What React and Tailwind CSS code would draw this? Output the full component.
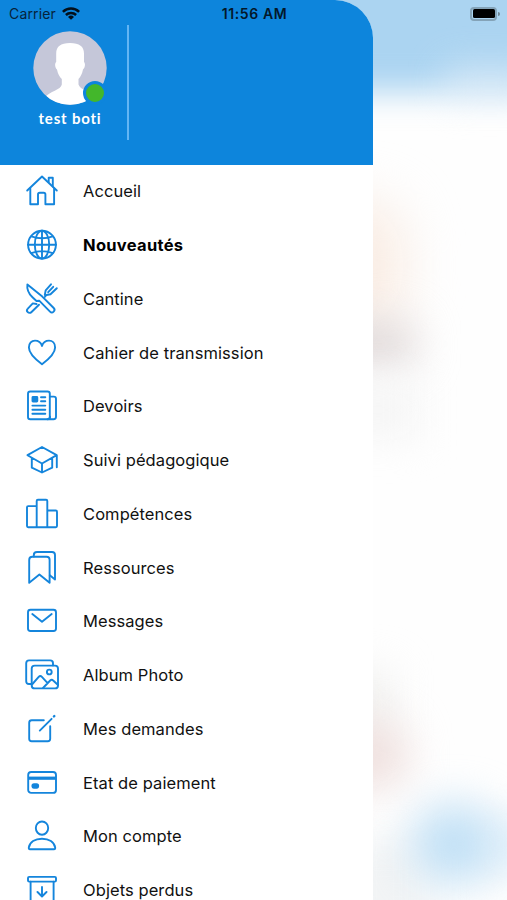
const icons = {
  home: (
    <>
      <path d="M3.2 17.5 18 3.5l14.8 14" />
      <path d="M24.700 9V4.8h4.100V13.500" />
      <path d="M6.300 15.500V31.200h7.700V21.500q0-1.700 1.700-1.700h4q1.700 0 1.700 1.700V31.200h8.700V15.500" />
    </>
  ),
  globe: (
    <>
      <circle cx="18" cy="17.700" r="13.900" />
      <ellipse cx="18" cy="17.700" rx="7.200" ry="13.900" />
      <path d="M18 3.800v27.800M4 17.700h28M7.300 9.300q10.700 4 21.400 0M7.300 26.100q10.700-4 21.400 0" />
    </>
  ),
  cutlery: (
    <>
      <path d="M3.400 3.400C2.600 9 5 13 8.500 16.300l4 3.700 2.700-.300L26 30.600a2.400 2.400 0 0 0 3.700-3.600L18.300 15.600z" />
      <path d="m12.500 23-3.700-.600-5 5.200a2.400 2.400 0 0 0 3.500 3.600l7.700-7.500" />
      <path d="m20.800 14 .9-4.700 5.300-6M24.200 11.200l5-5.400M32.800 7.200l-6.300 6.100-4 .7-1.700 2" />
    </>
  ),
  heart: (
    <path d="M18 29.200C9.500 22.800 4.900 18 4.900 12.400 4.900 8.200 7.600 5.600 11 5.600c3.300 0 5.900 1.900 7 5.300 1.100-3.400 3.700-5.300 7-5.300 3.400 0 6.100 2.600 6.100 6.800C31.100 18 26.500 22.800 18 29.200Z" />
  ),
  newspaper: (
    <>
      <rect x="4" y="3.500" width="21.800" height="27.800" rx="2.300" />
      <path d="M26 8.600h3.800q2.200 0 2.200 2.200v18q0 2.500-2.500 2.500h-6q2.500 0 2.500-2.500" />
      <rect x="8.500" y="9" width="4.800" height="4.500" rx=".5" fill="currentColor" />
      <path d="M17 9.300h4.300M17 13.300h4.300M8.400 17.600h12.900M8.400 21.700h12.900M8.400 25.700h12.900" />
    </>
  ),
  cap: (
    <path d="M18 5 3.500 13.200 18 21.500l14.700-8.300zM7.800 16v9.700L18 30.500l10.200-4.800V16M18 21.500v9M32.800 13.300v12" />
  ),
  podium: (
    <path d="M12.700 31.200H4.200q-1.200 0-1.200-1.200V11.300q0-1.200 1.200-1.200h8.500M12.700 31.200V5q0-1.200 1.200-1.200h8.200q1.200 0 1.200 1.200v26.200zM23.300 14.500h8.500q1.200 0 1.200 1.200V30q0 1.200-1.200 1.200h-8.500" />
  ),
  bookmarks: (
    <>
      <path d="M5.200 32.800V10q0-3.200 3.200-3.200h14.200q3 0 3 3v23L15.400 24.500z" />
      <path d="M9.800 6.600V5.200Q9.800 2 13 2h15q3 0 3 3v24.500l-5.200-4.200" />
    </>
  ),
  mail: (
    <>
      <rect x="4" y="6.700" width="28" height="21.300" rx="2.500" />
      <path d="m8.300 11 9.700 7.800 9.700-7.800" />
    </>
  ),
  album: (
    <>
      <path d="M7.500 27H5q-2.800 0-2.800-2.800V6.200Q2.200 3.400 5 3.400h21.200Q29 3.400 29 6.200v2.200" />
      <rect x="7.700" y="8.600" width="26.300" height="22.800" rx="3" />
      <circle cx="25.300" cy="15" r="2.400" />
      <path d="m8 27.500 6.700-7.600q1.600-1.700 3.200 0l5.500 6M19 31l7.200-7.500q1.500-1.500 3 0L34 28" />
    </>
  ),
  compose: (
    <>
      <path d="M19.800 9.300H7.700q-2.500 0-2.500 2.500v16q0 2.500 2.500 2.500h16q2.500 0 2.500-2.500V15.300M15.800 19.600 27.600 7.800" />
      <path d="m29.900 5.500.4-.4" strokeWidth="2.400" />
    </>
  ),
  card: (
    <>
      <rect x="4.200" y="7" width="27.800" height="20.900" rx="3" />
      <path d="M4.500 13.200h27.200" strokeWidth="3.200" strokeLinecap="butt" />
      <rect x="8.400" y="19.300" width="5.800" height="3.400" rx="1.600" fill="currentColor" />
    </>
  ),
  user: (
    <>
      <ellipse cx="18" cy="10.100" rx="6.200" ry="6.600" />
      <path d="M6 31.200q-1.400 0-1.200-1.500C5.600 24 11 20.700 18 20.700S30.400 24 31.200 29.700q.2 1.500-1.200 1.500z" />
    </>
  ),
  box: (
    <>
      <rect x="4" y="4.900" width="28" height="4.700" rx="1.200" />
      <path d="M6.600 9.800V34h23V9.800M18 15v9.300M13.500 20l4.500 4.500 4.500-4.500" />
    </>
  ),
};

const items = [
  ["home", "Accueil"],
  ["globe", "Nouveautés"],
  ["cutlery", "Cantine"],
  ["heart", "Cahier de transmission"],
  ["newspaper", "Devoirs"],
  ["cap", "Suivi pédagogique"],
  ["podium", "Compétences"],
  ["bookmarks", "Ressources"],
  ["mail", "Messages"],
  ["album", "Album Photo"],
  ["compose", "Mes demandes"],
  ["card", "Etat de paiement"],
  ["user", "Mon compte"],
  ["box", "Objets perdus"],
];

function MenuItem({ icon, label, active }) {
  return (
    <li className="flex h-[53.75px] shrink-0 items-center gap-[23px] pl-6">
      <svg
        viewBox="0 0 36 36"
        className="size-9 shrink-0 text-[#1485dc]"
        fill="none"
        stroke="currentColor"
        strokeWidth="1.9"
        strokeLinecap="round"
        strokeLinejoin="round"
      >
        {icons[icon]}
      </svg>
      <span
        className={
          active
            ? "text-[16.5px] font-bold tracking-[0.3px] whitespace-nowrap text-black"
            : "pt-[0.5px] text-[16.5px] tracking-[0.08px] whitespace-nowrap text-[#111]"
        }
      >
        {label}
      </span>
    </li>
  );
}

function Avatar() {
  return (
    <div className="relative size-[74px]">
      <svg viewBox="0 0 74 74" className="size-[74px]">
        <defs>
          <clipPath id="face">
            <circle cx="37" cy="37" r="36.700" />
          </clipPath>
        </defs>
        <g clipPath="url(#face)">
          <rect width="74" height="74" fill="#c5c7d9" />
          <path
            d="M37 12c-9.500 0-13.800 3.500-13.800 10.500v8.500c-1.800 1.500-1.200 6 .8 7.500.8 4 2.500 7.500 4.800 9.500v5.500C28 59 17 60 11 67v8h52v-8c-6-7-16-8-17.500-13.500V48c2-2 3.700-5.500 4.500-9.500 2-1.500 2.700-6 1-7.500v-8.500C51 15.500 46.500 12 37 12Z"
            fill="#fff"
          />
        </g>
      </svg>
      <span className="absolute top-[49.500px] left-[49.500px] size-6 rounded-full border-[3px] border-[#0d85dc] bg-[#43b72b]" />
    </div>
  );
}

function StatusBar() {
  return (
    <div className="absolute inset-x-0 top-0 z-20 flex h-[27px] items-center justify-between pr-[7px] pl-[9px] text-black">
      <div className="flex w-[120px] items-center gap-1.5">
        <span className="text-[14px] tracking-[0.150px] text-[#06233b]">Carrier</span>
        <svg viewBox="0 0 18 13" className="h-[13px] w-[18px]" fill="none" stroke="#03101b" strokeWidth="2.500">
          <path d="M.9 4.800a11.500 11.500 0 0 1 16.200 0M3.900 8a7.300 7.300 0 0 1 10.200 0" />
          <path d="M9 12.800 6 9.900a4.300 4.300 0 0 1 6 0z" fill="#03101b" stroke="none" />
        </svg>
      </div>
      <span className="text-[14px] font-semibold tracking-[0.600px] text-[#03182a]">11:56 AM</span>
      <div className="flex w-[120px] items-center justify-end gap-px">
        <span className="flex h-[14px] w-[27px] rounded-[4px] border-2 border-[#84a3b8] p-[0.500px]">
          <span className="flex-1 rounded-[1.500px] bg-black" />
        </span>
        <span className="h-1 w-[2px] rounded-r-full bg-[#6f8797]" />
      </div>
    </div>
  );
}

function Backdrop() {
  return (
    <div className="absolute inset-0 overflow-hidden bg-[#fefefe]">
      <div className="absolute -top-16 left-[300px] h-[156px] w-[280px] bg-[#abd4f1] blur-[16px]" />
      <div className="absolute top-[66px] left-[445px] h-[34px] w-[90px] bg-[#e9f1f9] opacity-60 blur-[18px]" />
      <div className="absolute top-[200px] left-[300px] h-[130px] w-[104px] rounded-[40px] bg-[#f9ece3] blur-[26px]" />
      <div className="absolute top-[322px] left-[310px] h-[44px] w-[106px] rounded-[18px] bg-[#dfd8d8] blur-[20px]" />
      <div className="absolute top-[380px] left-[320px] h-[60px] w-[100px] bg-[#f6f6f6] blur-[18px]" />
      <div className="absolute top-[675px] left-[310px] h-[60px] w-[78px] bg-[#ededeb] blur-[22px]" />
      <div className="absolute top-[722px] left-[305px] h-[66px] w-[102px] rounded-[24px] bg-[#efe0de] blur-[20px]" />
      <div className="absolute top-[840px] left-[340px] h-[100px] w-[90px] bg-[#f2f4f5] blur-[18px]" />
      <div className="absolute top-[815px] left-[480px] h-[60px] w-[50px] bg-[#e8f3fb] blur-[16px]" />
      <div className="absolute top-[804px] left-[412px] h-[80px] w-[84px] rounded-full bg-[#bfdff5] blur-[22px]" />
    </div>
  );
}

export default function App() {
  return (
    <div className="relative h-[900px] w-[507px] overflow-hidden font-['Inter','Liberation_Sans',sans-serif]">
      <Backdrop />
      <StatusBar />
      <aside className="relative z-10 flex h-full w-[372.5px] flex-col overflow-hidden rounded-tr-[38px] bg-white">
        <header className="flex h-[164.5px] shrink-0 bg-[#0d85dc] pt-[25px] pl-[13px]">
          <div className="flex h-[115px] w-[116px] flex-col items-center border-r-2 border-[#63b5f4] pt-[6px]">
            <Avatar />
            <span className="mt-[3px] font-[family-name:Lato,sans-serif] text-[15px] leading-5 font-bold tracking-[0.8px] whitespace-nowrap text-white">
              test boti
            </span>
          </div>
        </header>
        <ul className="flex flex-col">
          {items.map(([icon, label]) => (
            <MenuItem key={icon} icon={icon} label={label} active={icon === "globe"} />
          ))}
        </ul>
      </aside>
    </div>
  );
}
